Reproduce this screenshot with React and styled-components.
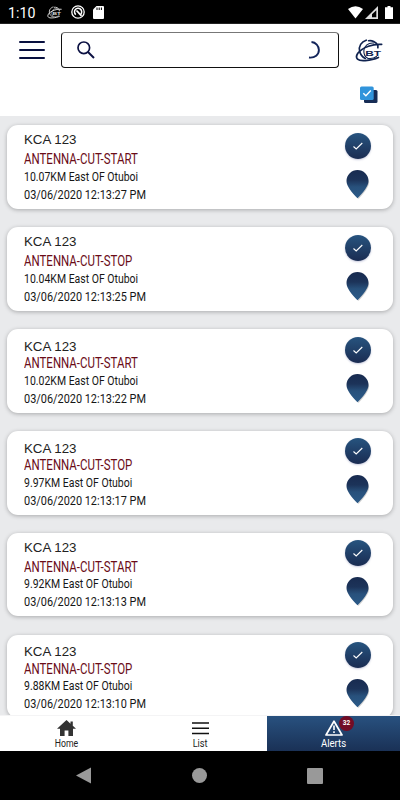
import React from "react"
import styled, { createGlobalStyle } from "styled-components"

const GlobalStyle = createGlobalStyle`
  * {
    box-sizing: border-box;
  }
  body {
    margin: 0;
    font-family: Roboto, "Liberation Sans", sans-serif;
  }
`

const Phone = styled.div`
  width: 400px;
  height: 800px;
  display: flex;
  flex-direction: column;
  overflow: hidden;
  background: #e9eaec;
`

const StatusBar = styled.div`
  height: 24px;
  flex: none;
  display: flex;
  align-items: center;
  padding: 1px 7px 0 8px;
  background: #000;
  color: #fff;
  border-bottom: 1px solid #222;
`

const Clock = styled.span`
  width: 39px;
  padding-top: 2px;
  font-size: 14.2px;
  line-height: 22px;
`

const StatusIcons = styled.div`
  display: flex;
  align-items: center;
  gap: ${(props) => props.gap}px;
  margin-left: ${(props) => (props.right ? "auto" : "0")};
`

const Header = styled.header`
  height: 92px;
  flex: none;
  background: #fff;
`

const SearchRow = styled.div`
  display: flex;
  align-items: center;
  padding: 8px 16px 0 19px;
`

const MenuLines = styled.div`
  width: 26px;
  height: 18px;
  display: flex;
  flex-direction: column;
  justify-content: space-between;
  margin-right: 16px;
`

const MenuLine = styled.span`
  height: 2.4px;
  border-radius: 1px;
  background: #08103f;
`

const SearchBox = styled.div`
  width: 278px;
  height: 36px;
  display: flex;
  align-items: center;
  justify-content: space-between;
  padding: 0 18px 0 14.5px;
  border: 1px solid #111;
  border-top-color: #777;
  border-radius: 4px;
  margin-right: 16px;
`

const SelectRow = styled.div`
  display: flex;
  justify-content: flex-end;
  padding: 18px 22.5px 0 0;
`

const AlertList = styled.main`
  flex: 1;
  min-height: 0;
  overflow: hidden;
  padding: 9.3px 7.3px 0;
`

const Card = styled.div`
  height: 83.7px;
  display: flex;
  justify-content: space-between;
  margin-bottom: 18.2px;
  padding: 0 21.5px 0 16.7px;
  border-radius: 11px;
  background: #fff;
  box-shadow: 0 1px 4px rgba(0, 0, 0, 0.28);
`

const CardText = styled.div`
  display: flex;
  flex-direction: column;
  white-space: nowrap;
`

const DeviceName = styled.div`
  height: 26px;
  font-family: "Liberation Sans", sans-serif;
  font-size: 13.3px;
  line-height: ${(props) => props.center * 2}px;
  color: #222;
`

// condensed lettering
const Narrow = styled.div`
  width: max-content;
  transform: scaleX(${(props) => props.ratio});
  transform-origin: ${(props) => props.origin || "left"} center;
`

const AlertType = styled(Narrow)`
  font-size: 14px;
  line-height: 17.6px;
  color: #6b0c18;
`

const Place = styled(Narrow)`
  font-size: 12.3px;
  line-height: 17px;
  color: #161616;
`

const Time = styled(Narrow)`
  font-size: 12.6px;
  line-height: 18px;
  color: #161616;
`

const Actions = styled.div`
  display: flex;
  flex-direction: column;
  align-items: center;
  padding-top: 7.5px;
`

const RoundButton = styled.div`
  width: 26px;
  height: 26px;
  display: flex;
  align-items: center;
  justify-content: center;
  border-radius: 50%;
  margin-bottom: 11px;
  background: linear-gradient(#27547f, #1a2c52);
  box-shadow: 0 1px 2px rgba(30, 40, 120, 0.25);
`

const TabBar = styled.nav`
  height: 36px;
  flex: none;
  display: grid;
  grid-template-columns: 133.5px 133.5px 133px;
  background: #fff;
  border-top: 1px solid #f4f4f5;
`

const Tab = styled.div`
  display: flex;
  flex-direction: column;
  align-items: center;
  padding-top: 4px;
  color: ${(props) => (props.active ? "#fff" : "#222")};
  background: ${(props) => (props.active ? "linear-gradient(#28517f, #1a3156)" : "#fff")};
`

const TabIcon = styled.div`
  position: relative;
  height: 16.5px;
`

const TabLabel = styled(Narrow)`
  font-size: ${(props) => props.size}px;
  line-height: 13px;
`

const Badge = styled.span`
  position: absolute;
  left: 14.5px;
  top: -4.5px;
  width: 15px;
  height: 15px;
  border-radius: 50%;
  background: #720c25;
  color: #fff;
  font-size: 6.5px;
  font-weight: 700;
  line-height: 15px;
  text-align: center;
`

const AndroidBar = styled.div`
  height: 49px;
  flex: none;
  display: flex;
  align-items: center;
  justify-content: space-between;
  padding: 0 77px 0 76px;
  background: #000;
`

const Logo = ({ color, width, height }) => (
  <svg width={width} height={height} viewBox='0 0 30 26' fill='none' stroke={color} strokeLinecap='round'>
    <path d='M12 2C7 3.5 3.5 8.5 5 14C6 18 8 20 11 21.5' strokeWidth='1.8' />
    <path d='M14.5 2.5C18 1.8 22.5 3.5 24.5 7.5V10' strokeWidth='1.8' />
    <path d='M28.5 6.5C20 5.5 8 9.5 3 16C-.5 21.5 3 24.5 11 23.8C17 23.4 21 22.5 25 20.5' strokeWidth='1.9' />
    <path d='M20 5C14 4.5 10 8 9.5 13C9.2 17 11 20 14 21.5C18 22 21 21 23 19.5' strokeWidth='1.2' />
    <text
      x='11'
      y='18.5'
      fill={color}
      stroke='none'
      fontFamily='Liberation Sans'
      fontWeight='700'
      fontSize='8.5'
      textLength='17'
      lengthAdjust='spacingAndGlyphs'
    >
      BT
    </text>
  </svg>
)

const Pin = () => (
  <svg width='24' height='31' viewBox='0 0 24 31' style={{ overflow: "visible" }}>
    <defs>
      <linearGradient id='pin' x1='0' y1='0' x2='0' y2='1'>
        <stop offset='0' stopColor='#182b50' />
        <stop offset='.35' stopColor='#1c3359' />
        <stop offset='.6' stopColor='#28517c' />
        <stop offset='1' stopColor='#2b5a88' />
      </linearGradient>
    </defs>
    <path d='M12.5 29C6.5 22.5 1.5 16.5 1.5 12A11 11 0 0 1 23.2 12C23.2 16.5 18 23 12.5 29Z' fill='#000' opacity='.18' />
    <path d='M11.5 28.3C5.5 22 .5 16 .5 11A11 11 0 0 1 22.5 11C22.5 16 17.5 22 11.5 28.3Z' fill='url(#pin)' />
  </svg>
)

const alerts = [
  { type: "START", km: "10.07", time: "12:13:27", center: 15.4 },
  { type: "STOP", km: "10.04", time: "12:13:25", center: 15 },
  { type: "START", km: "10.02", time: "12:13:22", center: 17.8 },
  { type: "STOP", km: "9.97", time: "12:13:17", center: 17.8 },
  { type: "START", km: "9.92", time: "12:13:13", center: 14.6 },
  { type: "STOP", km: "9.88", time: "12:13:10", center: 16.6 },
]

const AlertCard = ({ alert }) => (
  <Card>
    <CardText>
      <DeviceName center={alert.center}>KCA 123</DeviceName>
      <AlertType ratio={0.82}>ANTENNA-CUT-{alert.type}</AlertType>
      <Place ratio={0.852}>{alert.km}KM East OF Otuboi</Place>
      <Time ratio={0.866}>03/06/2020 {alert.time} PM</Time>
    </CardText>
    <Actions>
      <RoundButton>
        <svg width='12' height='10' viewBox='0 0 12 10' fill='none' stroke='#fff' strokeWidth='1.1'>
          <path d='M1.5 5.5L4.2 8L10.3 2' />
        </svg>
      </RoundButton>
      <Pin />
    </Actions>
  </Card>
)

const App = () => {
  return (
    <>
      <GlobalStyle />
      <Phone>
        <StatusBar>
          <Clock>1:10</Clock>
          <StatusIcons gap={8.5}>
            <Logo color='#ddd' width={15} height={13} />
            <svg width='14' height='14' viewBox='0 0 14 14' fill='none' stroke='#fff'>
              <circle cx='7' cy='7' r='6.2' strokeWidth='1.3' />
              <path d='M4.8 9.6A3.6 3.6 0 1 1 9.8 9.2' strokeWidth='1.5' />
              <path d='M5.5 5.5L10.5 10.8' strokeWidth='1.8' />
            </svg>
            <svg width='11' height='13' viewBox='0 0 11 13'>
              <path d='M3.5 0H10Q11 0 11 1V12Q11 13 10 13H1Q0 13 0 12V3.5Z' fill='#fff' />
              <path d='M4 1.5V4M6.2 1.5V4M8.4 1.5V4' stroke='#000' strokeWidth='1' />
            </svg>
          </StatusIcons>
          <StatusIcons gap={2} right>
            <svg width='15' height='13' viewBox='0 0 15 13'>
              <path d='M0 3Q7.5 -2.5 15 3L7.5 12.5Z' fill='#fff' />
            </svg>
            <svg width='13' height='13' viewBox='0 0 13 13' style={{ marginRight: 5 }}>
              <path d='M13 0V13H0Z' fill='#ddd' />
              <path d='M11.3 4.2V11.3H7V8.3Z' fill='#000' />
            </svg>
            <svg width='8' height='13' viewBox='0 0 8 13'>
              <path d='M2.5 0H5.5V1.3H8V13H0V1.3H2.5Z' fill='#fff' />
            </svg>
          </StatusIcons>
        </StatusBar>
        <Header>
          <SearchRow>
            <MenuLines>
              <MenuLine />
              <MenuLine />
              <MenuLine />
            </MenuLines>
            <SearchBox>
              <svg width='18' height='18' viewBox='0 0 18 18' fill='none' stroke='#0b1042'>
                <circle cx='6.8' cy='6.8' r='5.8' strokeWidth='1.7' />
                <path d='M11 11L17 17' strokeWidth='2' />
              </svg>
              <svg width='12' height='18' viewBox='0 0 12 18' fill='none' stroke='#12245a' strokeWidth='1.9'>
                <path d='M3.5 1A8 8 0 0 1 10.9 9C10.9 13.5 7 17.2 1 16.5' />
              </svg>
            </SearchBox>
            <Logo color='#10234f' width={28} height={25} />
          </SearchRow>
          <SelectRow>
            <svg width='18' height='18' viewBox='0 0 18 18'>
              <rect x='4' y='4' width='13.5' height='13' rx='1.5' fill='#172c55' />
              <rect x='0' y='.5' width='13.7' height='13.5' rx='1.5' fill='#3194db' />
              <path d='M3.3 7.2L5.9 9.8L10.8 4.5' fill='none' stroke='#fff' strokeWidth='1.4' />
            </svg>
          </SelectRow>
        </Header>
        <AlertList>
          {alerts.map((alert) => (
            <AlertCard key={alert.time} alert={alert} />
          ))}
        </AlertList>
        <TabBar>
          <Tab>
            <TabIcon>
              <svg width='19' height='17' viewBox='0 0 19 17' fill='#333'>
                <path d='M9.5 0L13.5 3.7V1.5H15.8V5.8L19 8.8H16V16H11.4V10.5H7.6V16H3V8.8H0Z' />
              </svg>
            </TabIcon>
            <TabLabel ratio={0.87} origin='center' size={10}>
              Home
            </TabLabel>
          </Tab>
          <Tab>
            <TabIcon>
              <svg width='17' height='17' viewBox='0 0 17 17' stroke='#111' strokeWidth='1.4'>
                <path d='M0 3H17M0 8.2H17M0 13.5H17' />
              </svg>
            </TabIcon>
            <TabLabel ratio={0.92} origin='center' size={10}>
              List
            </TabLabel>
          </Tab>
          <Tab active>
            <TabIcon>
              <svg width='18' height='17' viewBox='0 0 18 17' fill='none' stroke='#fff' strokeLinejoin='round'>
                <path d='M9 1.2L17 15H1Z' strokeWidth='1.7' />
                <path d='M9 5.5V10M9 11.3V13' strokeWidth='1.6' />
              </svg>
              <Badge>32</Badge>
            </TabIcon>
            <TabLabel ratio={0.87} origin='center' size={11}>
              Alerts
            </TabLabel>
          </Tab>
        </TabBar>
        <AndroidBar>
          <svg width='15' height='17' viewBox='0 0 15 17'>
            <path d='M15 .5V16.5L0 8.5Z' fill='#999' />
          </svg>
          <svg width='15' height='15' viewBox='0 0 15 15'>
            <circle cx='7.5' cy='7.5' r='7.5' fill='#999' />
          </svg>
          <svg width='16' height='16' viewBox='0 0 16 16'>
            <rect width='16' height='16' rx='1' fill='#999' />
          </svg>
        </AndroidBar>
      </Phone>
    </>
  )
}

export default App
